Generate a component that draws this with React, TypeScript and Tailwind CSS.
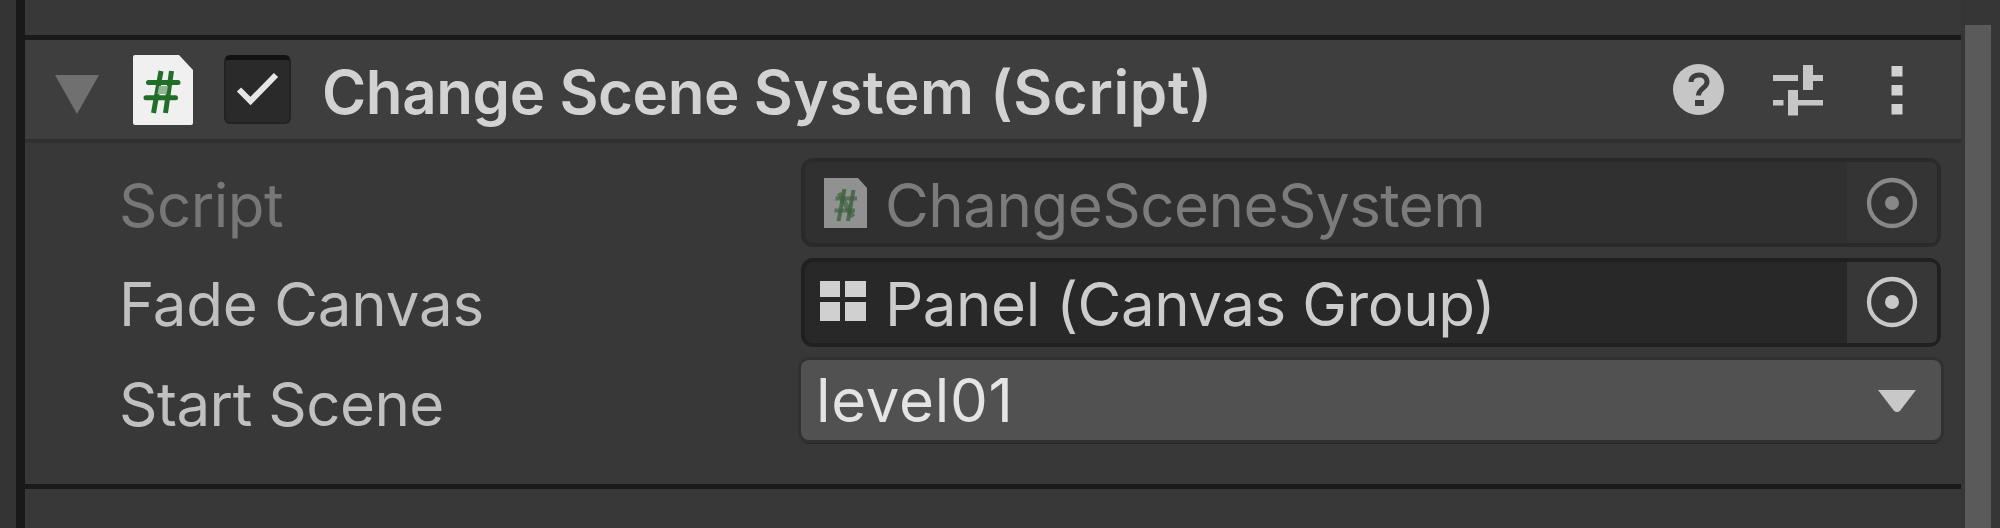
import type { ReactNode } from "react";

function HashPage({ className }: { className: string }) {
  return (
    <svg className={className} viewBox="0 0 60 70" preserveAspectRatio="none">
      <path d="M2 0H46L60 15V68a2 2 0 0 1-2 2H2a2 2 0 0 1-2-2V2a2 2 0 0 1 2-2Z" fill="#f0f0f0" />
      <g stroke="#226d28" strokeWidth="5" strokeLinecap="round" fill="none">
        <path d="M15.500 27.500H45M13 42.800H42.500" />
        <path d="M28 16 20.500 58M38.500 16 32.500 58" strokeLinecap="butt" />
      </g>
      <path d="M26 31h9l-1.500 8h-9Z" fill="#8fb592" />
    </svg>
  );
}

function SmallHashPage() {
  return (
    <svg className="h-[50px] w-[43px]" viewBox="0 0 43 50">
      <path d="M0 0H34L43 10V50H0Z" fill="#919191" />
      <g stroke="#3f6341" fill="none">
        <path d="M11.500 20.500H33M10.500 32.500H31" strokeWidth="4" strokeOpacity=".7" />
        <path d="M20.500 11 14.500 43M29.500 12 24 43" strokeWidth="4" strokeOpacity=".85" />
        <path d="M15 15 29 39" strokeWidth="5" strokeOpacity=".7" />
      </g>
    </svg>
  );
}

function PanelIcon() {
  return (
    <svg className="-mt-[2px] h-[42px] w-[47px]" viewBox="0 0 47 42" fill="#d0d0d0">
      <path d="M0 1H20V17H0ZM25 1H46V17H25ZM0 22H20V41H0ZM25 22H46V41H25Z" />
    </svg>
  );
}

function Picker({ color }: { color: string }) {
  return (
    <svg className="h-[52px] w-[52px]" viewBox="0 0 52 52">
      <circle cx="26" cy="26" r="23" fill="none" stroke={color} strokeWidth="4.300" />
      <circle cx="26" cy="26" r="7" fill={color} />
    </svg>
  );
}

function Row({ label, muted, children }: { label: string; muted?: boolean; children: ReactNode }) {
  return (
    <div className="flex h-[99.500px] items-center">
      <div
        className={`w-[682px] shrink-0 pt-[4px] text-[60px] leading-[90px] ${
          muted ? "text-[#777777]" : "text-[#c0c0c0]"
        } ${label === "Fade Canvas" ? "tracking-[-0.2px]" : "tracking-[-0.5px]"}`}
      >
        {label}
      </div>
      {children}
    </div>
  );
}

export default function App() {
  return (
    <div className="flex h-[528px] w-[2000px] overflow-hidden whitespace-nowrap bg-[#383838] font-['Inter',sans-serif]">
      <div className="w-[25px] shrink-0 border-r-[9px] border-[#191919] bg-[#343434]" />

      <main className="flex w-[1936px] shrink-0 flex-col">
        <div className="h-[40px] shrink-0 border-b-[5px] border-[#1a1a1a]" />

        <header className="flex h-[103px] shrink-0 items-center border-b-[4px] border-[#303030] bg-[#3e3e3e] pl-[29px]">
          <svg className="mt-[10px] h-[40px] w-[46px]" viewBox="0 0 46 40">
            <path d="M1 0H45L23 39Z" fill="#707070" />
          </svg>
          <HashPage className="ml-[33px] h-[70px] w-[60px]" />
          <div className="ml-[31px] flex h-[69px] w-[67px] items-center justify-center rounded-[6px] border-2 border-t-[5px] border-[#232323] border-t-[#121212] bg-[#2a2a2a]">
            <svg className="h-[40px] w-[46px]" viewBox="0 0 46 40">
              <path d="M4 18.500 15.500 30 41 4" fill="none" stroke="#e6e6e6" strokeWidth="6" />
            </svg>
          </div>
          <h1 className="ml-[31px] pt-[4px] text-[60px] font-semibold leading-[90px] text-[#d2d2d2]">
            <span className="tracking-[-0.400px]">Change </span>
            <span className="tracking-[-0.400px]">Scene </span>
            <span className="tracking-[0.550px]">System </span>
            <span className="tracking-[0.650px]">(Script)</span>
          </h1>

          <div className="ml-auto mr-[58px] flex items-center">
            <div className="flex h-[51px] w-[51px] items-center justify-center rounded-full bg-[#c6c6c6]">
              <svg className="h-[36px] w-[24px]" viewBox="0 0 24 36">
                <path d="M4 10C4 5 8 3 12.500 3 17 3 20 5.500 20 10c0 6-8.500 6.500-8.500 13.500" fill="none" stroke="#3e3e3e" strokeWidth="5" />
                <path d="M8 28h9v6H8Z" fill="#3e3e3e" />
              </svg>
            </div>
            <svg className="ml-[49px] h-[52px] w-[51px]" viewBox="0 0 51 52" fill="#c6c6c6">
              <path d="M0 11H25V17H0ZM30 1H40V11H50V17H40V26H30ZM0 36H10.500V41.500H0ZM15 26H25V36H50V41.500H25V51.500H15Z" />
            </svg>
            <svg className="ml-[67px] h-[52px] w-[12px]" viewBox="0 0 12 52" fill="#d2d2d2">
              <path d="M.500 2H11.500V12.500H.500ZM.500 21H11.500V31.500H.500ZM.500 40H11.500V50.500H.500Z" />
            </svg>
          </div>
        </header>

        <section className="h-[346px] shrink-0 border-b-[5px] border-[#1a1a1a] pl-[94px] pt-[10px]">
          <Row label="Script" muted>
            <div className="flex h-[89px] w-[1140px] items-center rounded-[12px] border-[4px] border-[#2a2a2a] bg-[#303030] pl-[19px]">
              <SmallHashPage />
              <span className="ml-[18px] pt-[4px] text-[60px] leading-[76px] tracking-[-0.500px] text-[#7b7b7b]">
                ChangeSceneSystem
              </span>
              <span className="ml-auto flex h-full w-[90px] items-center justify-center rounded-r-[6px] bg-[#343434]">
                <Picker color="#888888" />
              </span>
            </div>
          </Row>
          <Row label="Fade Canvas">
            <div className="flex h-[89px] w-[1140px] items-center rounded-[12px] border-[4px] border-[#202020] bg-[#282828] pl-[15px]">
              <PanelIcon />
              <span className="ml-[18px] pt-[4px] text-[60px] leading-[76px] tracking-[-0.450px] text-[#cccccc]">
                Panel (Canvas Group)
              </span>
              <span className="ml-auto flex h-full w-[90px] items-center justify-center rounded-r-[6px] bg-[#373737]">
                <Picker color="#c8c8c8" />
              </span>
            </div>
          </Row>
          <Row label="Start Scene">
            <div className="flex h-[80px] w-[1140px] -translate-y-[2px] items-center rounded-[8px] bg-[#515151] pl-[15px] pr-[25px] shadow-[0_0_0_3px_#313131,0_4px_0_0_#242424]">
              <span className="text-[60px] leading-[80px] tracking-[0.700px] text-[#e4e4e4]">level01</span>
              <svg className="ml-auto mt-[2px] h-[22px] w-[38px]" viewBox="0 0 40 22" preserveAspectRatio="none">
                <path d="M0 0H40L23 21Q20 23 17 21Z" fill="#c8c8c8" />
              </svg>
            </div>
          </Row>
        </section>
      </main>

      <aside className="flex grow bg-[#363636] pl-[4px] pt-[25px]">
        <div className="w-[26px] bg-[#5a5a5a]" />
      </aside>
    </div>
  );
}
